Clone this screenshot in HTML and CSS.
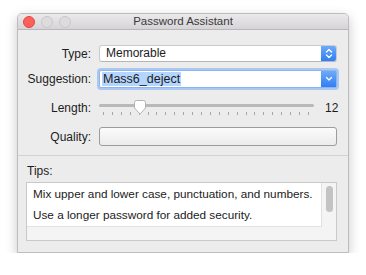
FILE: index.html
```html
<!DOCTYPE html>
<html lang="en">
<head>
    <meta charset="UTF-8">
    <meta name="viewport" content="width=device-width, initial-scale=1.0">
    <title>Password Assistant</title>
    <link rel="stylesheet" href="styles.css">
</head>
<body>
    <div class="window">
        <div class="titlebar">
            <div class="lights">
                <span class="light close"></span>
                <span class="light"></span>
                <span class="light"></span>
            </div>
            <div class="title">Password Assistant</div>
        </div>

        <div class="form">
            <div class="row row-type">
                <span class="label">Type:</span>
                <div class="popup">
                    <span class="popup-text">Memorable</span>
                    <span class="popup-btn">
                        <svg width="8" height="11" viewBox="0 0 8 11">
                            <path d="M1.5 4 L4 1.5 L6.5 4 M1.5 7 L4 9.5 L6.5 7" fill="none" stroke="#fff" stroke-width="1.3" stroke-linecap="round" stroke-linejoin="round"/>
                        </svg>
                    </span>
                </div>
            </div>

            <div class="row row-suggestion">
                <span class="label">Suggestion:</span>
                <div class="combo">
                    <span class="combo-text"><span class="selected">Mass6_deject</span></span>
                    <span class="combo-btn">
                        <svg width="8" height="6" viewBox="0 0 8 6">
                            <path d="M1.5 1.5 L4 4 L6.5 1.5" fill="none" stroke="#fff" stroke-width="1.3" stroke-linecap="round" stroke-linejoin="round"/>
                        </svg>
                    </span>
                </div>
            </div>

            <div class="row row-length">
                <span class="label">Length:</span>
                <div class="slider-cell">
                    <div class="slider">
                        <div class="track"></div>
                        <div class="ticks">
                            <span></span><span></span><span></span><span></span><span></span><span></span>
                            <span></span><span></span><span></span><span></span><span></span><span></span>
                            <span></span><span></span><span></span><span></span><span></span><span></span>
                            <span></span><span></span><span></span><span></span><span></span><span></span>
                        </div>
                        <svg class="knob" width="12" height="15" viewBox="0 0 12 15">
                            <path d="M2.5 0.5 H9.5 Q11.5 0.5 11.5 2.5 V8 L6 14 L0.5 8 V2.5 Q0.5 0.5 2.5 0.5 Z" fill="#fff" stroke="#b3b3b3" stroke-width="1"/>
                        </svg>
                    </div>
                    <span class="value">12</span>
                </div>
            </div>

            <div class="row row-quality">
                <span class="label">Quality:</span>
                <div class="meter"></div>
            </div>
        </div>

        <div class="tips">
            <div class="tips-label">Tips:</div>
            <div class="tipbox">
                <div class="tiplist">
                    <div class="tipitems">
                        <div class="tip">Mix upper and lower case, punctuation, and numbers.</div>
                        <div class="tip">Use a longer password for added security.</div>
                    </div>
                </div>
                <div class="scroller">
                    <div class="thumb"></div>
                </div>
            </div>
        </div>
    </div>
</body>
</html>
```

FILE: styles.css
```css
body {
    margin: 0;
    background: #fff;
    font-family: "Liberation Sans", Arial, sans-serif;
    font-size: 12px;
    color: #1c1c1c;
}
.window {
    margin: 13px 0 0 17px;
    width: 330px;
    background: #ececec;
    border: 1px solid #bdbdbd;
    border-radius: 5px 5px 0 0;
    box-shadow: 0 4px 12px rgba(0,0,0,0.22);
}
.titlebar {
    height: 15px;
    display: grid;
    grid-template-columns: 1fr auto 1fr;
    align-items: center;
    background: linear-gradient(#ebe9eb, #d6d4d6);
    border-bottom: 1px solid #b9b7b9;
    border-radius: 4px 4px 0 0;
}
.lights {
    display: flex;
    gap: 6px;
    padding-left: 5px;
}
.light {
    width: 10px;
    height: 10px;
    border-radius: 50%;
    background: #dcdcdc;
    border: 1px solid #c8c8c8;
}
.light.close {
    background: #fc605b;
    border-color: #e0483f;
}
.title {
    font-size: 11.5px;
    color: #3a3a3a;
    line-height: 15px;
}
.form {
    padding: 15px 11px 9px 0;
}
.row {
    display: grid;
    grid-template-columns: 73px 1fr;
    column-gap: 8px;
    align-items: center;
}
.label {
    text-align: right;
}
.row-type {
    height: 17px;
}
.row-suggestion {
    height: 18px;
    margin-top: 8px;
}
.row-length {
    height: 18px;
    margin-top: 11px;
}
.row-quality {
    height: 19px;
    margin-top: 10px;
}
.popup {
    height: 17px;
    box-sizing: border-box;
    display: flex;
    background: #fff;
    border: 1px solid #cbcbcb;
    border-bottom-color: #b5b5b5;
    border-radius: 3px;
    overflow: hidden;
}
.popup-text {
    flex: 1;
    padding-left: 6px;
    line-height: 15px;
}
.popup-btn, .combo-btn {
    width: 15px;
    display: flex;
    align-items: center;
    justify-content: center;
    background: linear-gradient(#6eaaf9, #2f7ff3);
}
.combo {
    height: 18px;
    box-sizing: border-box;
    display: flex;
    background: #fff;
    border: 1px solid #8fb3ea;
    border-radius: 2px;
    box-shadow: 0 0 0 2px #a9c8f4;
}
.combo-text {
    flex: 1;
    padding-left: 2px;
    line-height: 16px;
}
.selected {
    background: #b4d5fe;
    padding: 0 1px;
    font-size: 12.5px;
}
.slider-cell {
    display: flex;
    align-items: center;
}
.slider {
    position: relative;
    flex: 1;
    height: 18px;
}
.track {
    margin-top: 5px;
    height: 3px;
    border-radius: 2px;
    background: #b9b9b9;
}
.ticks {
    display: flex;
    justify-content: space-between;
    margin: 5px 5px 0 4px;
}
.ticks span {
    width: 1px;
    height: 3px;
    background: #a5a5a5;
}
.knob {
    position: absolute;
    left: 35px;
    top: 1px;
}
.value {
    width: 12px;
    margin-left: 11px;
    text-align: right;
}
.meter {
    height: 19px;
    box-sizing: border-box;
    border: 1px solid #9c9c9c;
    border-radius: 3px;
    background: linear-gradient(#fbfbfb, #ececec);
}
.tips {
    border-top: 1px solid #d3d3d3;
    padding: 8px 11px 11px 8px;
}
.tips-label {
    line-height: 15px;
    margin: 0 0 3px 1px;
}
.tipbox {
    height: 57px;
    display: flex;
    border: 1px solid #c9c9c9;
    background: #f4f4f4;
}
.tiplist {
    flex: 1;
}
.tipitems {
    background: #fff;
    border-right: 1px solid #e2e2e2;
    border-bottom: 1px solid #e2e2e2;
    height: 43px;
}
.tip {
    height: 21px;
    line-height: 21px;
    padding-left: 6px;
    font-size: 11.75px;
    color: #222;
}
.scroller {
    width: 14px;
    display: flex;
    justify-content: center;
    padding-top: 3px;
}
.thumb {
    width: 7px;
    height: 26px;
    border-radius: 4px;
    background: #c3c3c3;
}
```
